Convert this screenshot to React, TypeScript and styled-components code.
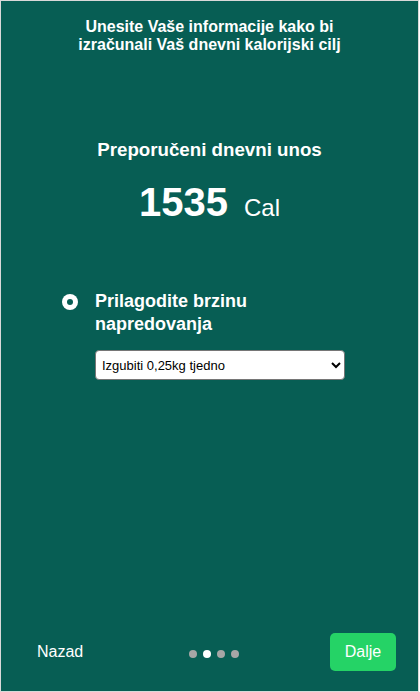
import React from "react";
import styled, { createGlobalStyle } from "styled-components";

const Global = createGlobalStyle`
  html, body { margin: 0; padding: 0; background: #ffffff; }
  body { font-family: "Liberation Sans", Arial, sans-serif; }
  * { box-sizing: border-box; }
`;

const Frame = styled.div`
  width: 419px;
  height: 692px;
  border: 1px solid #d9d9d9;
  background: #075e54;
  color: #ffffff;
  display: flex;
  flex-direction: column;
  font-family: "Liberation Sans", Arial, sans-serif;
`;

const Main = styled.div`
  flex: 1;
  display: flex;
  flex-direction: column;
`;

const Title = styled.h1`
  margin: 0 auto;
  padding-top: 17px;
  width: 290px;
  font-size: 16px;
  line-height: 18px;
  font-weight: 700;
  text-align: center;
`;

const Subtitle = styled.h2`
  margin: 85px 0 0;
  font-size: 18.72px;
  line-height: 22px;
  font-weight: 700;
  text-align: center;
`;

const Amount = styled.div`
  margin-top: 17px;
  display: flex;
  justify-content: center;
  align-items: baseline;
  line-height: 48px;
`;

const Number = styled.span`
  font-size: 40px;
  font-weight: 700;
`;

const Unit = styled.span`
  font-size: 24px;
  margin-left: 16px;
`;

const Option = styled.div`
  margin-top: 58px;
  padding-left: 61px;
  display: grid;
  grid-template-columns: 16px 250px;
  column-gap: 17px;
  row-gap: 14px;
`;

const Radio = styled.span`
  width: 16px;
  height: 16px;
  margin-top: 4px;
  border-radius: 50%;
  background: #ffffff;
  display: flex;
  align-items: center;
  justify-content: center;
  &::after {
    content: "";
    width: 6px;
    height: 6px;
    border-radius: 50%;
    background: #075e54;
  }
`;

const Label = styled.div`
  font-size: 18px;
  line-height: 23px;
  font-weight: 700;
  width: 200px;
`;

const Select = styled.select`
  grid-column: 2;
  width: 250px;
  height: 30px;
  border: 1px solid #767676;
  border-radius: 4px;
  background: #ffffff;
  color: #000000;
  font-family: "Liberation Sans", Arial, sans-serif;
  font-size: 13px;
  padding: 0 2px;
`;

const Footer = styled.div`
  display: grid;
  grid-template-columns: 1fr auto 1fr;
  align-items: center;
  padding: 0 22px 20px 36px;
`;

const Back = styled.span`
  font-size: 16px;
  justify-self: start;
`;

const Dots = styled.div`
  display: flex;
  gap: 6px;
  margin-top: 4px;
  margin-right: 6px;
`;

const Dot = styled.span<{ $active?: boolean }>`
  width: 8px;
  height: 8px;
  border-radius: 50%;
  background: ${(p) => (p.$active ? "#ffffff" : "#a6a6a6")};
`;

const Next = styled.button`
  justify-self: end;
  width: 66px;
  height: 38px;
  border: none;
  border-radius: 5px;
  background: #25d366;
  color: #ffffff;
  font-family: "Liberation Sans", Arial, sans-serif;
  font-size: 16px;
  padding: 0;
`;

export default function App() {
  return (
    <>
      <Global />
      <Frame>
        <Main>
          <Title>Unesite Vaše informacije kako bi izračunali Vaš dnevni kalorijski cilj</Title>
          <Subtitle>Preporučeni dnevni unos</Subtitle>
          <Amount>
            <Number>1535</Number>
            <Unit>Cal</Unit>
          </Amount>
          <Option>
            <Radio />
            <Label>Prilagodite brzinu napredovanja</Label>
            <Select defaultValue="0.25">
              <option value="0.25">Izgubiti 0,25kg tjedno</option>
              <option value="0.5">Izgubiti 0,5kg tjedno</option>
            </Select>
          </Option>
        </Main>
        <Footer>
          <Back>Nazad</Back>
          <Dots>
            <Dot />
            <Dot $active />
            <Dot />
            <Dot />
          </Dots>
          <Next>Dalje</Next>
        </Footer>
      </Frame>
    </>
  );
}
